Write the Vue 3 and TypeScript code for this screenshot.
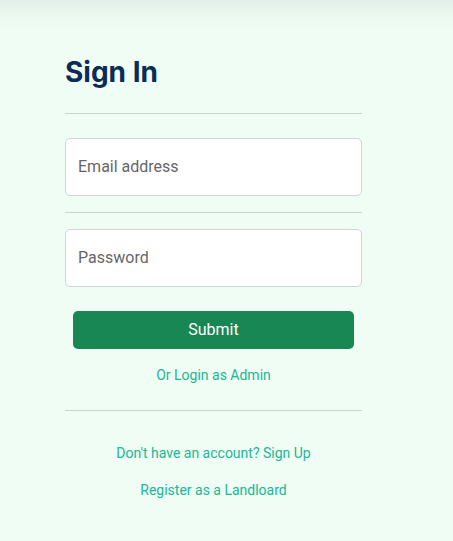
<script setup lang="ts">
import { ref } from 'vue'

const email = ref('')
const password = ref('')
</script>

<template>
  <main class="page">
    <form class="form" @submit.prevent>
      <h1 class="title">Sign In</h1>
      <hr class="rule" />
      <div class="field first">
        <input id="email" v-model="email" type="email" placeholder=" " />
        <label for="email">Email address</label>
      </div>
      <hr class="rule" />
      <div class="field">
        <input id="password" v-model="password" type="password" placeholder=" " />
        <label for="password">Password</label>
      </div>
      <button class="submit" type="submit">Submit</button>
      <a class="link" href="#admin">Or Login as Admin</a>
      <hr class="rule last" />
      <a class="link" href="#signup">Don't have an account? Sign Up</a>
      <a class="link spaced" href="#landlord">Register as a Landloard</a>
    </form>
  </main>
</template>

<style>
body {
  background: #effdf5;
}
</style>

<style scoped>
.page {
  box-sizing: border-box;
  min-height: 100vh;
  padding: 55px 91px 24px 65px;
  font-family: Roboto, sans-serif;
  font-size: 16px;
  line-height: 24px;
  background: linear-gradient(rgba(0, 0, 0, 0.05), rgba(0, 0, 0, 0.03) 9px, rgba(0, 0, 0, 0.01) 20px, rgba(0, 0, 0, 0) 32px) #effdf5;
}
.form {
  display: flex;
  flex-direction: column;
}
.title {
  margin: 0 0 23px;
  font-family: Inter, sans-serif;
  font-size: 28px;
  font-weight: 700;
  line-height: 35px;
  color: #0b2c54;
}
.rule {
  width: 100%;
  height: 1px;
  margin: 0 0 16px;
  border: 0;
  background: #c8d5ce;
}
.field {
  position: relative;
  display: flex;
  margin-bottom: 16px;
}
.first {
  margin-top: 8px;
}
.field input {
  box-sizing: border-box;
  width: 100%;
  height: 58px;
  padding: 16px 12px;
  border: 1px solid #ced4da;
  border-radius: 5px;
  background: #fff;
  color: #212529;
  font: inherit;
}
.field label {
  position: absolute;
  top: 17px;
  left: 13px;
  color: #666;
  pointer-events: none;
}
.field input:focus + label,
.field input:not(:placeholder-shown) + label {
  top: 4px;
  font-size: 13px;
}
.submit {
  height: 38px;
  margin: 8px 8px 16px;
  padding: 6px 12px;
  border: 0;
  border-radius: 5px;
  background: #198754;
  color: #fff;
  font: inherit;
  cursor: pointer;
}
.link {
  align-self: center;
  font-size: 14px;
  line-height: 21px;
  color: #20b794;
  text-decoration: none;
}
.last {
  margin: 24px 0 32px;
}
.spaced {
  margin-top: 16px;
}
</style>
